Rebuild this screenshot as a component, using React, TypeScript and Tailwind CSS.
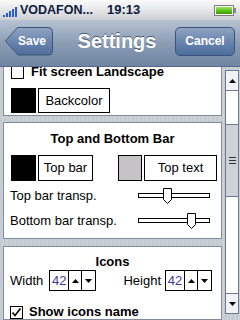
import React from 'react';

const Tri = ({ up, w = 7, h = 4 }: { up?: boolean; w?: number; h?: number }) => (
  <svg width={w} height={h} viewBox={`0 0 ${w} ${h}`}>
    <polygon points={up ? `0,${h} ${w / 2},0 ${w},${h}` : `0,0 ${w},0 ${w / 2},${h}`} fill="#000" />
  </svg>
);

const Checkbox = ({ checked }: { checked?: boolean }) => (
  <div className="w-[13px] h-[13px] border border-black bg-white flex items-center justify-center shrink-0">
    {checked && (
      <svg width="11" height="11" viewBox="0 0 11 11">
        <path d="M1.5 5.5 L4 8.5 L9.5 1.5" fill="none" stroke="#000" strokeWidth="1.6" />
      </svg>
    )}
  </div>
);

const Slider = ({ pos }: { pos: 'a' | 'b' }) => (
  <div className="relative w-[72px] h-[16px] pt-[5px]">
    <div className="h-[5px] w-full border border-black bg-white" />
    <div className={`absolute top-0 ${pos === 'a' ? 'left-[25px]' : 'left-[49px]'}`}>
      <svg width="9" height="16" viewBox="0 0 9 16">
        <path d="M0.5 0.5 H8.5 V11.5 L4.5 15.5 L0.5 11.5 Z" fill="#fff" stroke="#000" />
      </svg>
    </div>
  </div>
);

const Spinner = ({ value }: { value: string }) => (
  <div className="flex h-[21px] border border-black bg-white">
    <div className="w-[18px] flex items-center justify-center text-[13px] text-[#3b3ba4]">{value}</div>
    <div className="w-[13px] border-l border-black flex items-center justify-center">
      <Tri up />
    </div>
    <div className="w-[14px] border-l border-black flex items-center justify-center">
      <Tri />
    </div>
  </div>
);

const Panel = ({ className, children }: { className?: string; children: React.ReactNode }) => (
  <div className={`w-[219px] bg-white border border-[#7f8b9b] ${className ?? ''}`}>{children}</div>
);

export default function App() {
  return (
    <div className="w-[240px] h-[320px] overflow-hidden flex flex-col font-['Liberation_Sans',Arial,sans-serif] text-black">
      {/* status bar */}
      <div className="h-[20px] shrink-0 flex items-center bg-gradient-to-b from-[#fbfbfb] to-[#cdd0d4] text-[#0f1b3d] font-bold text-[12px]">
        <div className="flex items-end gap-[1px] ml-[3px] h-[11px] mt-[2px]">
          <div className="w-[2px] h-[2px] bg-[#2a5bd4]" />
          <div className="w-[2px] h-[4px] bg-[#2a5bd4]" />
          <div className="w-[2px] h-[6px] bg-[#2a5bd4]" />
          <div className="w-[2px] h-[8px] bg-[#2a5bd4]" />
          <div className="w-[2px] h-[10px] bg-[#2a5bd4]" />
        </div>
        <span className="ml-[3px] text-[12.5px]">VODAFON...</span>
        <span className="ml-[14px] text-[13px]">19:13</span>
        <div className="ml-auto mr-[4px] flex items-center">
          <div className="w-[20px] h-[11px] border border-[#7d7d7d] bg-white p-[1px]">
            <div className="w-full h-full bg-gradient-to-b from-[#9ae85a] via-[#5cc21c] to-[#3d9a10]" />
          </div>
          <div className="w-[2px] h-[5px] bg-[#8a8a8a]" />
        </div>
      </div>

      {/* nav bar */}
      <div className="h-[47px] shrink-0 flex items-center justify-between px-[5px] pb-[4px] bg-gradient-to-b from-[#b7c3d2] via-[#8b9db5] to-[#6f85a2] border-b border-[#56698a]">
        <div className="w-[48px] h-[29px] bg-[#3b5378] p-[1px] rounded-r-[5px] [clip-path:polygon(0_50%,13px_0,100%_0,100%_100%,13px_100%)]">
          <div className="w-full h-full rounded-r-[4px] bg-gradient-to-b from-[#8ea3c2] via-[#6a86ae] to-[#4d6d9c] flex items-center justify-end pr-[6px] text-white font-bold text-[12px] [clip-path:polygon(0_50%,12px_0,100%_0,100%_100%,12px_100%)]">
            Save
          </div>
        </div>
        <div className="text-white font-bold text-[20px] ml-[6px] [text-shadow:0_-1px_0_#4a5a72]">Settings</div>
        <div className="w-[60px] h-[29px] rounded-[5px] border border-[#3b5378] bg-gradient-to-b from-[#8ea3c2] via-[#6a86ae] to-[#4d6d9c] flex items-center justify-center text-white font-bold text-[12px]">
          Cancel
        </div>
      </div>

      {/* content */}
      <div className="flex-1 flex overflow-hidden bg-[repeating-linear-gradient(90deg,#c4cad1_0px,#c4cad1_2px,#ccd1d7_2px,#ccd1d7_4px)]">
        <div className="flex-1 pl-[3px] flex flex-col text-[13px]">
          <Panel className="mt-[-12px] pt-[9px] pb-[2px] px-[7px]">
            <div className="flex items-center h-[14px] gap-[7px]">
              <Checkbox />
              <span className="font-bold">Fit screen Landscape</span>
            </div>
            <div className="flex mt-[9px] h-[25px] gap-[2px]">
              <div className="w-[25px] h-full bg-black" />
              <div className="w-[72px] h-full border border-black flex items-center justify-center">Backcolor</div>
            </div>
          </Panel>

          <Panel className="mt-[6px] pt-[6px] pb-[7px]">
            <div className="h-[16px] text-center font-bold">Top and Bottom Bar</div>
            <div className="flex mt-[10px] h-[26px] pl-[7px]">
              <div className="w-[25px] h-full bg-black" />
              <div className="w-[55px] ml-[2px] h-full border border-black flex items-center justify-center">Top bar</div>
              <div className="w-[24px] ml-[25px] h-full border border-black bg-[#c6c3c6]" />
              <div className="w-[73px] ml-[2px] h-full border border-black flex items-center justify-center">Top text</div>
            </div>
            <div className="flex items-center justify-between h-[20px] mt-[5px] pl-[6px] pr-[11px]">
              <span>Top bar transp.</span>
              <Slider pos="a" />
            </div>
            <div className="flex items-center justify-between h-[20px] mt-[5px] pl-[6px] pr-[11px]">
              <span>Bottom bar transp.</span>
              <Slider pos="b" />
            </div>
          </Panel>

          <Panel className="mt-[7px] pt-[5px] px-[6px]">
            <div className="h-[16px] text-center font-bold">Icons</div>
            <div className="flex items-center justify-between h-[21px] mt-[2px] pr-[3px]">
              <div className="flex items-center gap-[6px]">
                <span>Width</span>
                <Spinner value="42" />
              </div>
              <div className="flex items-center gap-[4px]">
                <span>Height</span>
                <Spinner value="42" />
              </div>
            </div>
            <div className="flex items-center h-[14px] mt-[14px] gap-[6px]">
              <Checkbox checked />
              <span className="font-bold">Show icons name</span>
            </div>
          </Panel>
        </div>

        {/* scrollbar */}
        <div className="w-[14px] ml-[3px] mr-[1px] mt-[3px] h-[244px] flex flex-col border border-[#6d7a8b] bg-white">
          <div className="h-[20px] shrink-0 bg-[#f2f2f2] border-b border-[#6d7a8b] flex items-center justify-center">
            <Tri up />
          </div>
          <div className="h-[33px] shrink-0" />
          <div className="h-[73px] shrink-0 bg-[#ced2d7] border-y border-[#6d7a8b] flex flex-col items-center justify-center gap-[2px]">
            <div className="w-[7px] h-[1px] bg-[#333]" />
            <div className="w-[7px] h-[1px] bg-[#333]" />
            <div className="w-[7px] h-[1px] bg-[#333]" />
          </div>
          <div className="flex-1" />
          <div className="h-[20px] shrink-0 bg-[#f2f2f2] border-t border-[#6d7a8b] flex items-center justify-center">
            <Tri />
          </div>
        </div>
      </div>
    </div>
  );
}
